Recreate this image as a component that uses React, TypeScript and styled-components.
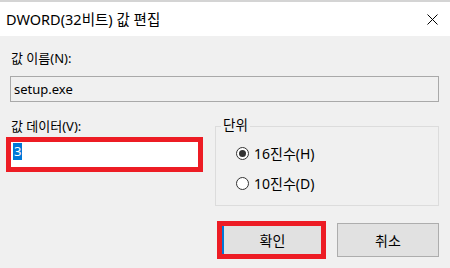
import styled, { createGlobalStyle } from 'styled-components';

const GlobalStyle = createGlobalStyle`
  body {
    margin: 0;
    background: #f0f0f0;
    font-family: "Noto Sans", "Noto Sans CJK KR", sans-serif;
    color: #000;
  }
`;

export default function App() {
  return (
    <>
      <GlobalStyle />
      <Window>
        <TopEdge />
        <TitleBar>
          <Title>DWORD(32비트) 값 편집</Title>
          <CloseButton>
            <svg width="11" height="11" viewBox="0 0 11 11">
              <path d="M0.5 0.5 L10.5 10.5 M10.5 0.5 L0.5 10.5" stroke="#000" strokeWidth="1" fill="none" />
            </svg>
          </CloseButton>
        </TitleBar>
        <Body>
          <Label>값 이름(N):</Label>
          <NameField>setup.exe</NameField>
          <MiddleRow>
            <DataColumn>
              <Label>값 데이터(V):</Label>
              <DataMark>
                <DataField>
                  <Selected>3</Selected>
                </DataField>
              </DataMark>
            </DataColumn>
            <GroupBox>
              <Legend>단위</Legend>
              <RadioRow $first>
                <Radio $checked />
                16진수(H)
              </RadioRow>
              <RadioRow>
                <Radio />
                10진수(D)
              </RadioRow>
            </GroupBox>
          </MiddleRow>
          <ButtonRow>
            <ButtonMark>
              <Button $primary>확인</Button>
            </ButtonMark>
            <Button>취소</Button>
          </ButtonRow>
        </Body>
      </Window>
    </>
  );
}

const Window = styled.div`
  width: 450px;
  height: 268px;
  background: #f0f0f0;
  overflow: hidden;
  font-size: 13px;
`;

const TopEdge = styled.div`
  height: 2px;
  background: #d4d4d4;
`;

const TitleBar = styled.div`
  height: 34px;
  background: #fff;
  display: flex;
  align-items: center;
  justify-content: space-between;
  padding: 0 12px 0 6px;
`;

const Title = styled.span`
  font-size: 14.5px;
  line-height: 20px;
`;

const CloseButton = styled.span`
  display: flex;
  width: 11px;
  height: 11px;
`;

const Body = styled.div`
  padding: 0 11px 0 6px;
`;

const Label = styled.div`
  margin: 14px 0 0 5px;
  line-height: 16px;
`;

const NameField = styled.div`
  margin: 10px 0 0 4px;
  height: 26px;
  box-sizing: border-box;
  border: 1px solid #a9a9a9;
  background: #f0f0f0;
  padding-left: 3px;
  line-height: 24px;
`;

const MiddleRow = styled.div`
  display: grid;
  grid-template-columns: 197px 1fr;
  column-gap: 12px;
  align-items: start;
`;

const DataColumn = styled.div`
  display: flex;
  flex-direction: column;
  & > ${Label} {
    margin-top: 16px;
  }
`;

const DataMark = styled.div`
  margin-top: 3px;
  width: 197px;
  height: 35px;
  box-sizing: border-box;
  border: 5px solid #ed1c24;
`;

const DataField = styled.div`
  height: 100%;
  background: #fff;
  padding-left: 2px;
`;

const Selected = styled.span`
  display: inline-block;
  margin-top: 1px;
  padding: 0 1px;
  height: 17px;
  line-height: 17px;
  background: #0078d7;
  color: #fff;
`;

const GroupBox = styled.div`
  position: relative;
  margin-top: 24px;
  height: 80px;
  box-sizing: border-box;
  border: 1px solid #dcdcdc;
`;

const Legend = styled.span`
  position: absolute;
  top: -10px;
  left: 5px;
  padding: 0 2px;
  background: #f0f0f0;
  line-height: 16px;
  font-size: 13.5px;
`;

const RadioRow = styled.div<{ $first?: boolean }>`
  display: flex;
  align-items: center;
  gap: 5px;
  height: 16px;
  font-size: 14px;
  margin: ${(p) => (p.$first ? '18px' : '14px')} 0 0 20px;
`;

const Radio = styled.span<{ $checked?: boolean }>`
  width: 13px;
  height: 13px;
  box-sizing: border-box;
  border-radius: 50%;
  border: 1px solid #333;
  background: #fff;
  display: flex;
  align-items: center;
  justify-content: center;
  &::after {
    content: '';
    display: ${(p) => (p.$checked ? 'block' : 'none')};
    width: 7px;
    height: 7px;
    border-radius: 50%;
    background: #333;
  }
`;

const ButtonRow = styled.div`
  display: flex;
  align-items: center;
  gap: 11px;
  margin: 15px 0 0 211px;
`;

const ButtonMark = styled.div`
  width: 109px;
  height: 38px;
  box-sizing: border-box;
  border: 5px solid #ed1c24;
`;

const Button = styled.div<{ $primary?: boolean }>`
  box-sizing: border-box;
  display: flex;
  align-items: center;
  justify-content: center;
  background: #e1e1e1;
  font-size: 14px;
  ${(p) =>
    p.$primary
      ? `
    width: 100%;
    height: 100%;
    border-left: 2px solid #0078d7;
  `
      : `
    width: 102px;
    height: 34px;
    border: 1px solid #adadad;
  `}
`;
